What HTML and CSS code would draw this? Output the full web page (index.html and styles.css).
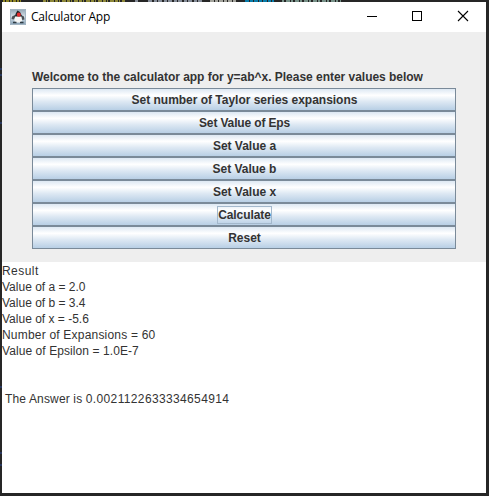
FILE: index.html
```html
<!DOCTYPE html>
<html lang="en">
<head>
<meta charset="utf-8">
<title>Calculator App</title>
<link rel="stylesheet" href="styles.css">
</head>
<body>
<svg class="backdrop" width="489" height="496" aria-hidden="true">
  <g fill="none" stroke-width="2">
    <path d="M3 1h18" stroke="#8d8426" stroke-dasharray="2 1 3 1"/>
    <path d="M43 1h82" stroke="#8d8738" stroke-dasharray="3 1 1 2 4 1"/>
    <path d="M135 1h3M148 1h54" stroke="#858c98" stroke-dasharray="4 2 3 1"/>
    <path d="M210 1h27" stroke="#a3a39b" stroke-dasharray="4 1 3 1"/>
    <path d="M245 1h29" stroke="#087caa" stroke-dasharray="4 1 3 1"/>
    <path d="M282 1h59" stroke="#769087" stroke-dasharray="2 2 4 1"/>
    <path d="M0 69h2M0 75h2M0 123h2M0 387h2M0 453h2M0 465h2" stroke="#28375d"/>
  </g>
</svg>
<main class="window">
  <header class="titlebar">
    <svg class="app-icon" width="16" height="16" viewBox="0 0 16 16">
      <defs><linearGradient id="tile" x2="0" y2="1"><stop stop-color="#8fa3b2"/><stop offset=".5" stop-color="#d9e3ea"/><stop offset="1" stop-color="#7f9bb2"/></linearGradient></defs>
      <rect width="16" height="16" fill="url(#tile)"/>
      <path d="M.5.5h15v15H.5z" fill="none" stroke="#a3b5c2"/>
      <path d="M5 6 2 7.5 1.5 10l2 .5L5 9zM11 6l3 1.5.5 3-2 .5L11 9z" fill="#4b5257"/>
      <path d="M7.5 1.5 10 3l1.5 3 .5 2H4.5L6 4z" fill="#202628"/>
      <path d="M5 7.5h6.5l.5 4-1.5 2H6l-1.5-2z" fill="#f5f6f5"/>
      <ellipse cx="8.8" cy="5.7" rx="2" ry="2.1" fill="#e32b2d"/>
      <path d="M3 13.5h3.5M10 13.5h3.5" stroke="#303c43" stroke-width="1.6"/>
    </svg>
    <h1 class="title">Calculator App</h1>
    <div class="controls">
      <svg width="46" height="30" shape-rendering="crispEdges"><path d="M17 14.5h10" stroke="#000"/></svg>
      <svg width="46" height="30" shape-rendering="crispEdges"><path d="M16.5 9.5h9v9h-9z" fill="none" stroke="#000"/></svg>
      <svg width="46" height="30"><path d="m16 9 10 10m0-10L16 19" stroke="#000" stroke-width="1.1"/></svg>
    </div>
  </header>
  <section class="panel">
    <p class="welcome">Welcome to the calculator app for y=ab^x. Please enter values below</p>
    <div class="buttons">
      <button><span>Set number of Taylor series expansions</span></button>
      <button><span class="tight">Set Value of Eps</span></button>
      <button><span>Set Value a</span></button>
      <button><span>Set Value b</span></button>
      <button><span>Set Value x</span></button>
      <button><span class="focused">Calculate</span></button>
      <button><span>Reset</span></button>
    </div>
  </section>
  <div class="output">
    <p class="wide">Result</p>
    <p>Value of a = 2.0</p>
    <p>Value of b = 3.4</p>
    <p>Value of x = -5.6</p>
    <p class="medium">Number of Expansions = 60</p>
    <p class="slight">Value of Epsilon = 1.0E-7</p>
    <p class="answer">The Answer is <span class="digits">0.0021122633334654914</span></p>
  </div>
</main>
</body>
</html>
```
FILE: styles.css
```css
* { box-sizing: border-box; }
body {
  margin: 0;
  padding: 2px;
  height: 496px;
  overflow: hidden;
  background: #262626;
  color: #333;
  font: 12px "Liberation Sans", Arial, sans-serif;
}
.backdrop { position: absolute; left: 0; top: 0; }
.window {
  display: flex;
  flex-direction: column;
  width: 484px;
  height: 491px;
  background: #fff;
}
.titlebar {
  display: flex;
  align-items: center;
  height: 30px;
  padding-left: 8px;
}
.app-icon { margin-right: 5px; }
.title {
  margin: 0;
  font: 12px/16px "Open Sans", sans-serif;
  letter-spacing: -0.2px;
  color: #000;
}
.controls { display: flex; margin-left: auto; margin-right: -2px; }
.panel {
  height: 230px;
  padding: 37px 30px 0;
  background: #eee;
}
.welcome {
  margin: 0;
  height: 19px;
  line-height: 16px;
  font-weight: bold;
  letter-spacing: -0.025px;
  white-space: nowrap;
}
.buttons { display: flex; flex-direction: column; }
button {
  display: flex;
  align-items: center;
  justify-content: center;
  width: 424px;
  height: 23px;
  padding: 0 0 0 1px;
  border: 1px solid #7a8a99;
  border-radius: 0;
  background: linear-gradient(#dde8f3 0%, #fff 30%, #dde8f3 60%, #b8cfe5 100%);
  color: #333;
  font: bold 12px/16px "Liberation Sans", Arial, sans-serif;
  letter-spacing: -0.02px;
}
.tight { letter-spacing: -0.15px; }
.focused { outline: 1px solid #a3b8cc; letter-spacing: -0.08px; }
.output { padding-top: 1px; line-height: 16px; white-space: nowrap; }
.output p { margin: 0; }
.output .wide { letter-spacing: 0.45px; }
.output .medium { letter-spacing: 0.2px; }
.output .slight { letter-spacing: 0.08px; }
.output .answer { margin-top: 32px; padding-left: 3px; letter-spacing: 0.15px; }
.digits { letter-spacing: 0.36px; }
```
